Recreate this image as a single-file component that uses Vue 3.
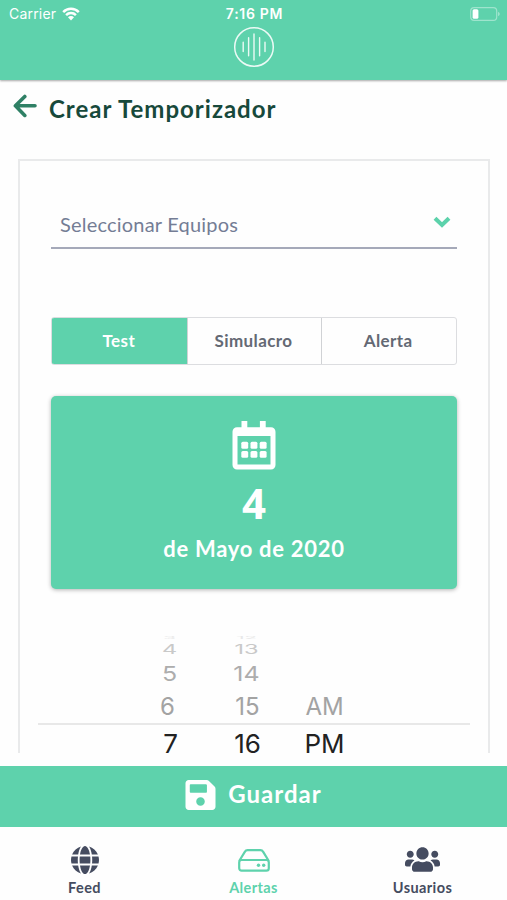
<script setup>
import { ref } from 'vue'

const kinds = ['Test', 'Simulacro', 'Alerta']
const kind = ref('Test')

const wheel = [
  { cls: 'edge', hour: '3', minute: '12', half: '' },
  { cls: 'far', hour: '4', minute: '13', half: '' },
  { cls: 'mid', hour: '5', minute: '14', half: '' },
  { cls: 'near', hour: '6', minute: '15', half: 'AM' },
  { cls: 'current', hour: '7', minute: '16', half: 'PM' },
]
</script>

<template>
  <div class="screen">
    <header class="header">
      <div class="status">
        <div class="carrier">
          <span>Carrier</span>
          <svg class="wifi" viewBox="0 0 18 14">
            <path d="M1.2 5.1a11 11 0 0 1 15.6 0M4.1 8.1a7 7 0 0 1 9.8 0" fill="none" stroke="#fff" stroke-width="2.5" />
            <path d="M9 13.4 6 10.3a4.2 4.2 0 0 1 6 0z" fill="#fff" />
          </svg>
        </div>
        <div class="clock">7:16 PM</div>
        <svg class="battery" viewBox="0 0 30 14">
          <rect x="0.7" y="0.7" width="26" height="12.6" rx="3.4" fill="none" stroke="#fff" stroke-opacity=".4" stroke-width="1.2" />
          <rect x="2.6" y="2.2" width="5.8" height="9.6" rx="1.5" fill="#fff" />
          <path d="M28 4.8q1.8.8 1.8 2.2T28 9.2z" fill="#fff" fill-opacity=".4" />
        </svg>
      </div>
      <svg class="logo" viewBox="0 0 42 42" fill="none" stroke="#fff" stroke-opacity=".88" stroke-linecap="round">
        <circle cx="21" cy="21" r="19.3" stroke-width="1.5" />
        <path d="M10.2 16.3v9.2M15.6 11.8v18M21 8v26M26.6 11.8v18M32 16.3v9.2" stroke-width="1.4" />
      </svg>
    </header>

    <div class="title">
      <svg class="back" viewBox="0 0 24 24" fill="none" stroke="#2f8065" stroke-width="3.6" stroke-linecap="round" stroke-linejoin="round">
        <path d="M11.8 2.4 2.4 11.8l9.4 9.6M3 11.8h19" />
      </svg>
      <h1>Crear Temporizador</h1>
    </div>

    <main class="card">
      <div class="select">
        <span>Seleccionar Equipos</span>
        <svg class="chevron" viewBox="0 0 18 12">
          <path d="M2 2.2 9 9l7-6.8" fill="none" stroke="#5cd2ab" stroke-width="4" />
        </svg>
      </div>

      <div class="segments">
        <button v-for="k in kinds" :key="k" :class="{ active: k === kind }" @click="kind = k">{{ k }}</button>
      </div>

      <section class="date">
        <svg class="calendar" viewBox="0 0 44 50" fill="#fff">
          <path fill-rule="evenodd" d="M9.5 1h5.8v6.3h12.6V1h5.8v6.3H39a4.5 4.5 0 0 1 4.5 4.5V45a4.5 4.5 0 0 1-4.5 4.5H5A4.5 4.5 0 0 1 .5 45V11.8A4.5 4.5 0 0 1 5 7.3h4.5zM5.5 16v28.5h33V16z" />
          <g>
            <rect x="9.3" y="21.8" width="6.9" height="6.9" rx="1.5" />
            <rect x="18.5" y="21.8" width="6.9" height="6.9" rx="1.5" />
            <rect x="27.7" y="21.8" width="6.9" height="6.9" rx="1.5" />
            <rect x="9.3" y="30.9" width="6.9" height="6.9" rx="1.5" />
            <rect x="18.5" y="30.9" width="6.9" height="6.9" rx="1.5" />
            <rect x="27.7" y="30.9" width="6.9" height="6.9" rx="1.5" />
          </g>
        </svg>
        <div class="day">4</div>
        <div class="month">de Mayo de 2020</div>
      </section>

      <div class="picker">
        <div v-for="row in wheel" :key="row.hour" class="row" :class="row.cls">
          <span>{{ row.hour }}</span>
          <span>{{ row.minute }}</span>
          <span>{{ row.half }}</span>
        </div>
      </div>
    </main>

    <button class="save">
      <svg viewBox="0 32 448 448" fill="#fff">
        <path d="M433.941 129.941l-83.882-83.882A48 48 0 0 0 316.118 32H48C21.49 32 0 53.49 0 80v352c0 26.51 21.49 48 48 48h352c26.51 0 48-21.49 48-48V163.882a48 48 0 0 0-14.059-33.941zM224 416c-35.346 0-64-28.654-64-64 0-35.346 28.654-64 64-64s64 28.654 64 64c0 35.346-28.654 64-64 64zm96-304.52V212c0 6.627-5.373 12-12 12H76c-6.627 0-12-5.373-12-12V108c0-6.627 5.373-12 12-12h228.52c3.183 0 6.235 1.264 8.485 3.515l3.48 3.48A11.996 11.996 0 0 1 320 111.48z" />
      </svg>
      <span>Guardar</span>
    </button>

    <nav class="tabs">
      <a class="tab">
        <svg class="globe" viewBox="0 8 496 496" fill="currentColor">
          <path d="M336.5 160C322 70.7 287.8 8 248 8s-74 62.7-88.5 152h177zM152 256c0 22.2 1.2 43.5 3.3 64h185.3c2.1-20.5 3.3-41.8 3.3-64s-1.2-43.5-3.3-64H155.3c-2.1 20.5-3.3 41.8-3.3 64zm324.7-96c-28.6-67.9-86.5-120.4-158-141.6 24.4 33.8 41.2 84.7 50 141.6h108zM177.2 18.4C105.8 39.6 47.8 92.1 19.3 160h108c8.7-56.9 25.5-107.8 49.9-141.6zM487.4 192H372.7c2.1 21 3.3 42.5 3.3 64s-1.2 43-3.3 64h114.6c5.5-20.5 8.6-41.8 8.6-64s-3.1-43.5-8.5-64zM120 256c0-21.5 1.2-43 3.3-64H8.6C3.2 212.5 0 233.8 0 256s3.2 43.5 8.6 64h114.6c-2-21-3.2-42.5-3.2-64zm39.5 96c14.5 89.3 48.7 152 88.5 152s74-62.7 88.5-152h-177zm159.3 141.6c71.4-21.2 129.4-73.7 158-141.6h-108c-8.8 56.9-25.6 107.8-50 141.6zM19.3 352c28.6 67.9 86.5 120.4 158 141.6-24.4-33.8-41.2-84.7-50-141.6h-108z" />
        </svg>
        <span>Feed</span>
      </a>
      <a class="tab active">
        <svg class="drive" viewBox="0 0 32 23" fill="none" stroke="currentColor" stroke-width="2.2">
          <path d="M1.2 12 6.8 2.9Q7.8 1.2 9.6 1.2h12.8Q24.2 1.2 25.2 2.9l5.6 9.1" stroke-linejoin="round" />
          <rect x="1.2" y="11" width="29.6" height="10.6" rx="2.4" />
          <g fill="currentColor" stroke="none">
            <circle cx="20.5" cy="16.3" r="1.7" />
            <circle cx="25.7" cy="16.3" r="1.7" />
          </g>
        </svg>
        <span>Alertas</span>
      </a>
      <a class="tab">
        <svg class="users" viewBox="0 32 640 448" fill="currentColor">
          <path d="M96 224c35.3 0 64-28.7 64-64s-28.7-64-64-64-64 28.7-64 64 28.7 64 64 64zm448 0c35.3 0 64-28.7 64-64s-28.7-64-64-64-64 28.7-64 64 28.7 64 64 64zm32 32h-64c-17.6 0-33.5 7.1-45.1 18.6 40.3 22.1 68.9 62 75.1 109.4h66c17.7 0 32-14.3 32-32v-32c0-35.3-28.7-64-64-64zm-256 0c61.9 0 112-50.1 112-112S381.9 32 320 32 208 82.1 208 144s50.1 112 112 112zm76.8 32h-8.3c-20.8 10-43.9 16-68.5 16s-47.6-6-68.5-16h-8.3C179.6 288 128 339.6 128 403.2V432c0 26.5 21.5 48 48 48h288c26.5 0 48-21.5 48-48v-28.8c0-63.6-51.6-115.2-115.2-115.2zm-223.7-13.4C161.5 263.1 145.6 256 128 256H64c-35.3 0-64 28.7-64 64v32c0 17.7 14.3 32 32 32h65.9c6.3-47.4 34.9-87.3 75.2-109.4z" />
        </svg>
        <span>Usuarios</span>
      </a>
    </nav>
  </div>
</template>

<style>
body {
  margin: 0;
  background: #fff;
}
</style>

<style scoped>
.screen {
  width: 507px;
  height: 900px;
  display: flex;
  flex-direction: column;
  overflow: hidden;
  background: #fefefe;
  font-family: Lato, 'Open Sans', sans-serif;
}
* {
  box-sizing: border-box;
}
svg {
  display: block;
  flex: none;
}
button {
  border: 0;
  margin: 0;
  padding: 0;
  background: none;
  font-family: inherit;
}
.header {
  flex: none;
  height: 80px;
  background: #5ed2ac;
  box-shadow: 0 1px 2px rgba(0, 0, 0, 0.35);
  display: flex;
  flex-direction: column;
  align-items: center;
}
.status {
  width: 100%;
  height: 26px;
  padding: 1px 7px 0 9px;
  display: grid;
  grid-template-columns: 1fr auto 1fr;
  align-items: center;
  color: #fff;
  font-family: Inter, sans-serif;
  font-size: 14px;
}
.carrier {
  display: flex;
  align-items: center;
  gap: 6px;
  letter-spacing: 0.2px;
}
.wifi {
  width: 18px;
  height: 14px;
}
.clock {
  font-size: 14px;
  font-weight: 600;
  letter-spacing: 0.7px;
}
.battery {
  width: 30px;
  height: 14px;
  justify-self: end;
}
.logo {
  width: 42px;
  height: 42px;
}
.title {
  flex: none;
  height: 79px;
  padding: 14px 0 0 13px;
  display: flex;
  align-items: flex-start;
  gap: 12px;
}
.back {
  width: 24px;
  height: 24px;
}
h1 {
  margin: 0;
  font-size: 24px;
  line-height: 30px;
  font-weight: 700;
  color: #17493b;
  letter-spacing: 1px;
}
.card {
  flex: none;
  width: 472px;
  height: 594px;
  margin: 0 0 13px 18px;
  padding: 29px 31px 0;
  border: 2px solid #e9eaeb;
  border-bottom: 0;
  overflow: hidden;
}
.select {
  height: 59px;
  padding: 11px 6px 0 9px;
  border-bottom: 2px solid #a5a9b9;
  display: flex;
  justify-content: space-between;
  align-items: center;
  color: #747d95;
  font-size: 20px;
  letter-spacing: 0.2px;
}
.chevron {
  width: 18px;
  height: 12px;
  margin-bottom: 4px;
}
.segments {
  height: 48px;
  margin-top: 68px;
  border: 1px solid #dcdde0;
  border-radius: 3px;
  overflow: hidden;
  display: grid;
  grid-template-columns: repeat(3, 1fr);
}
.segments button {
  padding: 0 2px 2px 0;
  color: #646974;
  font-size: 17px;
  font-weight: 700;
  letter-spacing: 0.4px;
  border-left: 1px solid #d0d2d5;
}
.segments button.active {
  background: #5ed2ac;
  border-color: #5ed2ac;
  color: #fff;
}
.date {
  height: 193px;
  margin-top: 31px;
  padding-top: 24px;
  border-radius: 5px;
  background: #5ed2ac;
  box-shadow: 0 1px 4px rgba(0, 0, 0, 0.3);
  display: flex;
  flex-direction: column;
  align-items: center;
  color: #fff;
  font-weight: 700;
}
.calendar {
  width: 44px;
  height: 50px;
}
.day {
  margin-top: 8px;
  font-family: 'Open Sans', sans-serif;
  font-size: 42px;
  line-height: 50px;
  font-weight: 700;
}
.month {
  margin-top: 6px;
  font-size: 22px;
  line-height: 30px;
  letter-spacing: 0.7px;
}
.picker {
  margin: 44px -13px 0;
  font-family: Inter, sans-serif;
  font-size: 24px;
}
.row {
  display: flex;
  align-items: center;
  padding-left: 93px;
  text-align: center;
  line-height: 30px;
}
.row span {
  flex: none;
  width: 77px;
  height: 30px;
}
.edge {
  height: 9px;
  color: #e8e8e8;
}
.edge span {
  transform: scale(0.85, 0.15);
}
.far {
  height: 16px;
  color: #c9c9c9;
}
.far span {
  transform: scale(0.98, 0.52);
}
.mid {
  height: 31px;
  color: #adadad;
}
.mid span {
  transform: scale(1.04, 0.84);
}
.near {
  height: 36px;
  padding-top: 2px;
  color: #a3a3a3;
  border-bottom: 2px solid #e8e8e8;
}
.near span:first-child {
  transform: translateX(-2px);
}
.near span:not(:first-child) {
  transform: translateX(1px);
}
.current {
  height: 38px;
  font-size: 26px;
  color: #222;
}
.current span {
  transform: translateX(1px);
}
.save {
  flex: none;
  height: 61px;
  background: #5ed2ac;
  display: flex;
  align-items: center;
  justify-content: center;
  gap: 12px;
  padding-bottom: 4px;
  color: #fff;
  font-size: 24px;
  line-height: 28px;
  font-weight: 700;
  letter-spacing: 1px;
}
.save svg {
  width: 31px;
  height: 30px;
}
.save span {
  padding-bottom: 2px;
}
.tabs {
  flex: 1;
  display: grid;
  grid-template-columns: repeat(3, 1fr);
  background: #fefefe;
}
.tab {
  display: flex;
  flex-direction: column;
  align-items: center;
  justify-content: flex-end;
  padding-bottom: 2px;
  color: #454c60;
  font-size: 14.5px;
  line-height: 20px;
  font-weight: 700;
  letter-spacing: 0.4px;
}
.tab.active {
  color: #5ed2ac;
}
.globe {
  width: 28px;
  height: 28px;
  margin-bottom: 4px;
}
.drive {
  width: 32px;
  height: 23px;
  margin-bottom: 6px;
}
.users {
  width: 35px;
  height: 25px;
  margin-bottom: 6px;
}
</style>
